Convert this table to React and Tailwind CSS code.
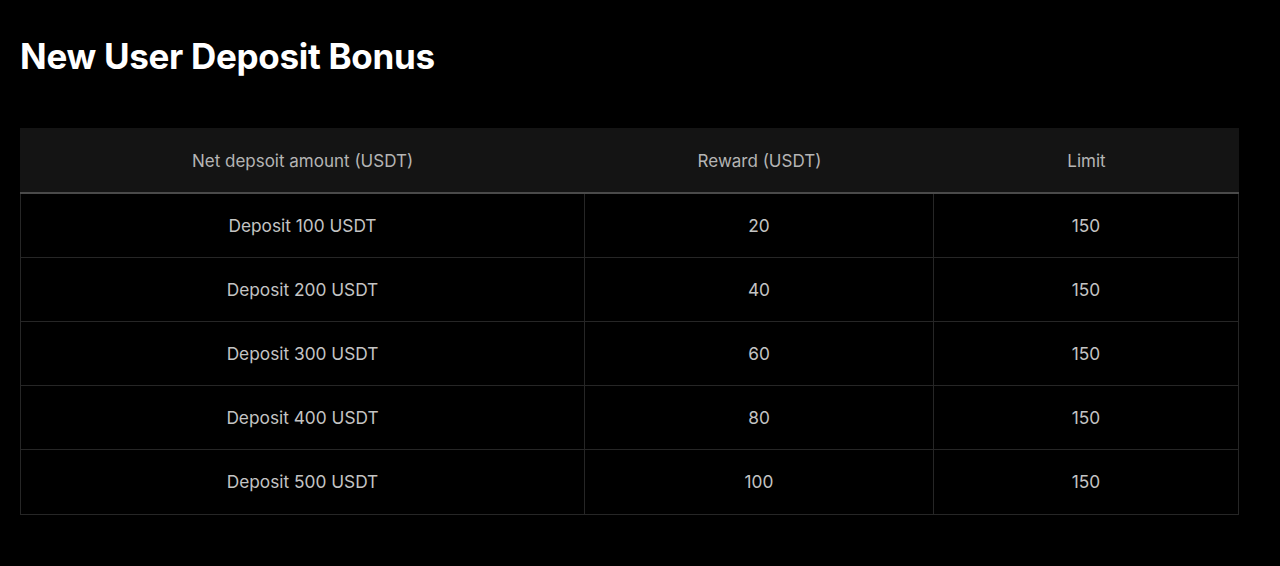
export default function App() {
  const rows = [
    ["Deposit 100 USDT", "20", "150"],
    ["Deposit 200 USDT", "40", "150"],
    ["Deposit 300 USDT", "60", "150"],
    ["Deposit 400 USDT", "80", "150"],
    ["Deposit 500 USDT", "100", "150"],
  ];
  return (
    <div className="w-[1280px] h-[566px] bg-black pl-[20px] pr-[42px] pt-[34px]" style={{ fontFamily: "Inter, 'Noto Sans', sans-serif" }}>
      <h1 className="text-[35px] leading-[44px] font-bold text-white tracking-[-0.3px]">New User Deposit Bonus</h1>
      <div className="mt-[50px] w-[1219px]">
        <div className="grid grid-cols-[565px_349px_305px] h-[66px] pt-[3px] bg-[#141414] border-b-2 border-[#4a4a4a] text-[#b5b5b5] text-[17px]">
          <div className="flex items-center justify-center">Net depsoit amount (USDT)</div>
          <div className="flex items-center justify-center">Reward (USDT)</div>
          <div className="flex items-center justify-center">Limit</div>
        </div>
        <div className="border-x border-b border-[#262626]">
          {rows.map((r, i) => (
            <div key={i} className={`grid grid-cols-[564px_349px_304px] h-[64px] text-[#c4c4c4] text-[17.3px] ${i < rows.length - 1 ? "border-b border-[#262626]" : ""}`}>
              <div className="flex items-center justify-center border-r border-[#262626]">{r[0]}</div>
              <div className="flex items-center justify-center border-r border-[#262626]">{r[1]}</div>
              <div className="flex items-center justify-center">{r[2]}</div>
            </div>
          ))}
        </div>
      </div>
    </div>
  );
}
